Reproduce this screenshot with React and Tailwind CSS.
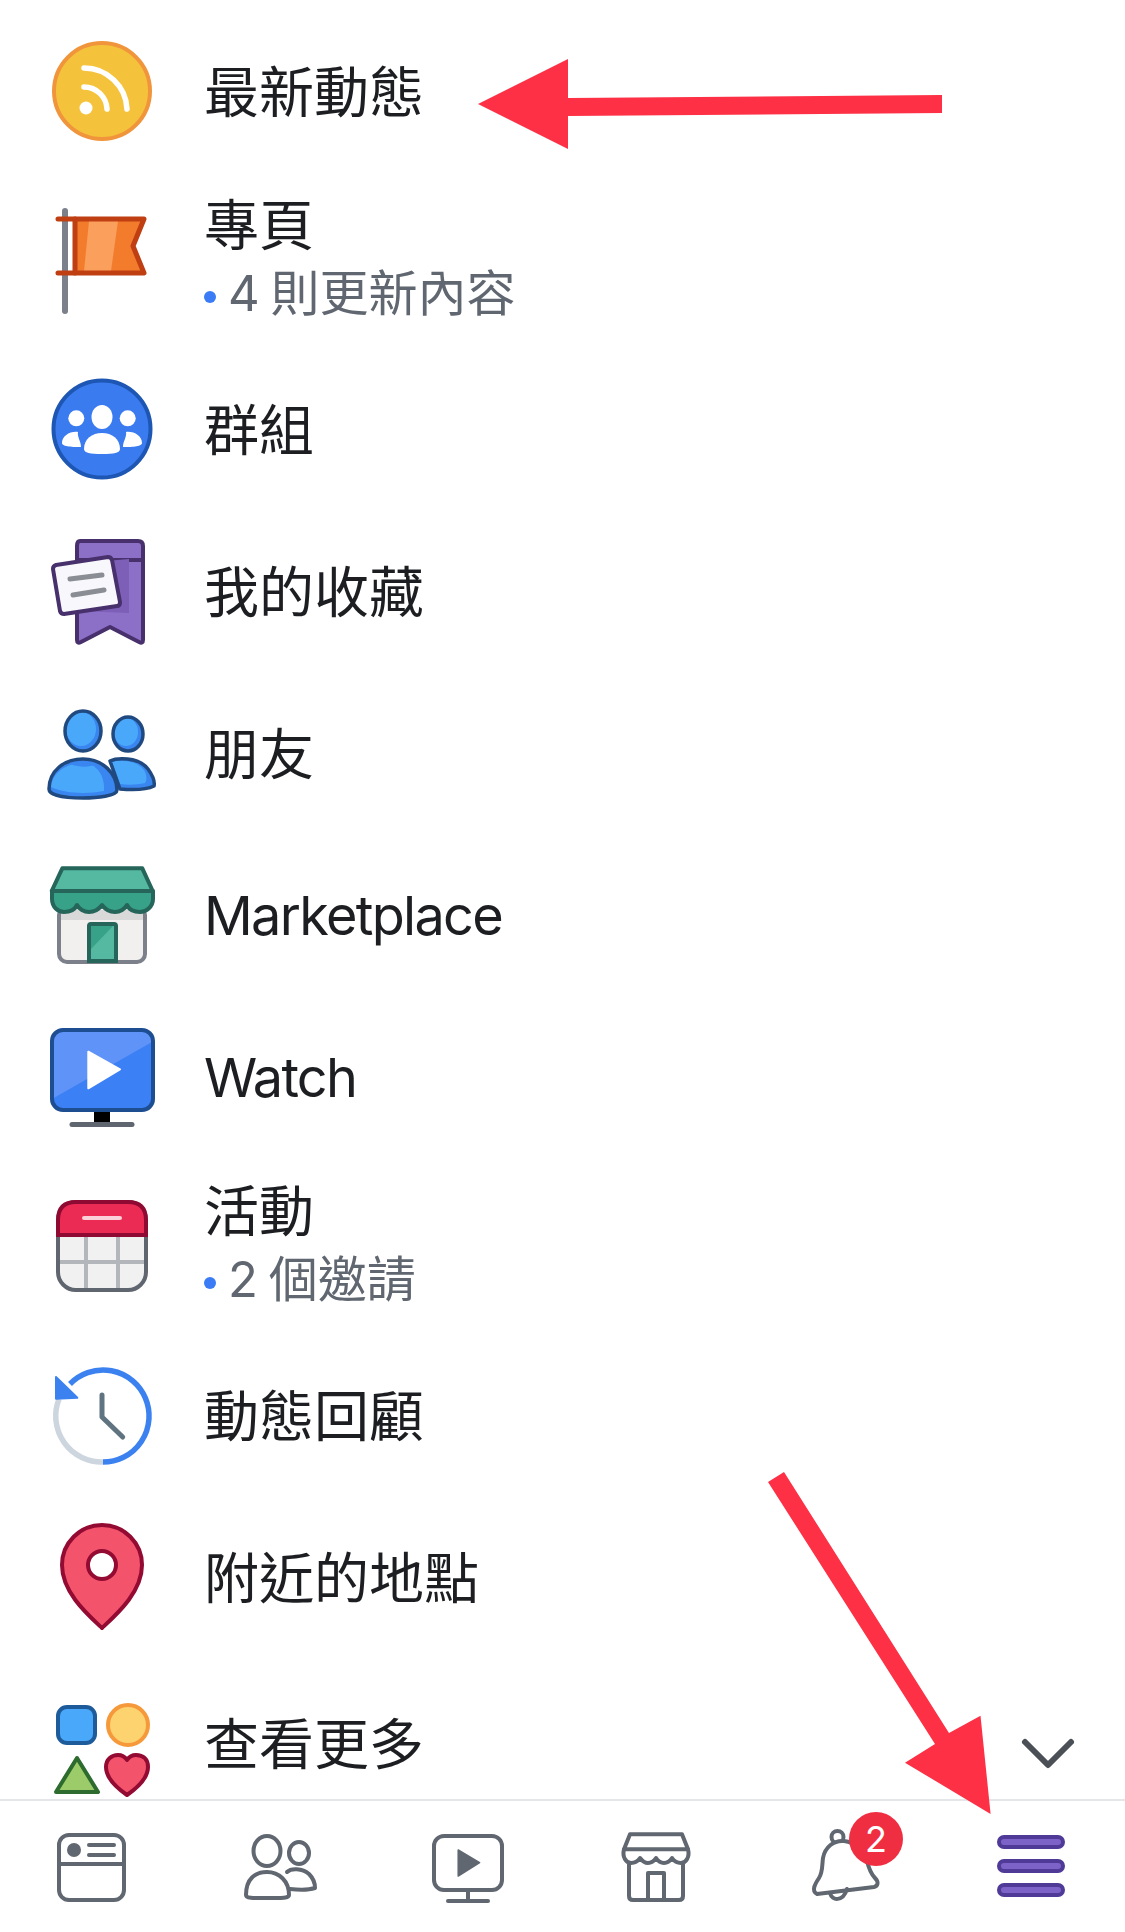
const FeedIcon = () => (
  <>
    <circle r="48" fill="#f5c33b" stroke="#f0953b" strokeWidth="4" />
    <circle cx="-16" cy="17" r="6.5" fill="#fff" />
    <g fill="none" stroke="#fff" strokeWidth="5.5" strokeLinecap="round">
      <path d="M-18 -23 A43 43 0 0 1 25 18" />
      <path d="M-18 -4 A23 23 0 0 1 5 18" />
    </g>
  </>
)

const FlagIcon = () => (
  <>
    <rect x="-40" y="-52" width="6" height="106" rx="3" fill="#7b808a" />
    <path d="M-27 -41H42L31 -14L42 13H-27Z" fill="#f27b2c" />
    <path d="M-13 -39H16L9 11H-18Z" fill="#fb9f5c" />
    <g fill="none" stroke="#bf3f12" strokeWidth="5" strokeLinecap="round" strokeLinejoin="round">
      <path d="M-44 -41H42L31 -14L42 13H-44" />
      <path d="M-27 -41V13" />
    </g>
  </>
)

const GroupsIcon = () => (
  <>
    <circle r="48.5" fill="#3b7bf0" stroke="#1d56b3" strokeWidth="4" />
    <g fill="#fff">
      <ellipse cy="-12" rx="10.5" ry="12" />
      <circle cx="-25.7" cy="-10.7" r="8" />
      <circle cx="25.7" cy="-10.7" r="8" />
      <path d="M-18 20C-18 10 -10 4 0 4C10 4 18 10 18 20C18 24 12 25 0 25C-12 25 -18 24 -18 20Z" />
      <path d="M-21 18C-28 18 -40 18 -40 14C-40 7 -32 2 -24 3C-25 8 -21 12 -21 18Z" />
      <path d="M21 18C28 18 40 18 40 14C40 7 32 2 24 3C25 8 21 12 21 18Z" />
    </g>
  </>
)

const BookmarkIcon = () => (
  <>
    <path d="M-22 -50H36Q41 -50 41 -45V49Q41 53 37 51L8 36L-21 51Q-25 53 -25 49V-45Q-25 -50 -22 -50Z" fill="#8c6fc6" stroke="#47306b" strokeWidth="4" strokeLinejoin="round" />
    <path d="M-25 -31H41" stroke="#47306b" strokeWidth="4" />
    <path d="M4 -30L27 -32V22L-22 20L-20 18Z" fill="#7d5fb8" />
    <path d="M-46 -26L6 -34Q9 -34 10 -31L18 11Q18 15 15 15L-38 23Q-41 23 -42 20L-49 -22Q-49 -25 -46 -26Z" fill="#f8f7fb" stroke="#47306b" strokeWidth="4" strokeLinejoin="round" />
    <g stroke="#8a8d94" strokeWidth="5" strokeLinecap="round">
      <path d="M-32 -12L0 -16" />
      <path d="M-29 4L2 -1" />
    </g>
  </>
)

const FriendsIcon = () => (
  <>
    {/* small person, behind */}
    <path d="M8 8C14 5 36 3 46 16C51 23 53 29 52 33C44 37 30 37 18 36Z" fill="#3a86f0" />
    <path d="M10 9C16 7 34 6 42 17C45 22 45 27 43 30C34 32 26 32 18 31Z" fill="#4aa8fb" />
    <path d="M8 8C14 5 36 3 46 16C51 23 53 29 52 33C44 37 30 37 18 36Z" fill="none" stroke="#20497f" strokeWidth="3.5" strokeLinejoin="round" />
    <ellipse cx="26" cy="-19" rx="15" ry="17" fill="#3a86f0" />
    <ellipse cx="24" cy="-21" rx="12" ry="14" fill="#4aa8fb" />
    <ellipse cx="26" cy="-19" rx="15" ry="17" fill="none" stroke="#20497f" strokeWidth="3.5" />
    {/* big person */}
    <ellipse cx="-19" cy="-22" rx="18" ry="20" fill="#3a86f0" />
    <ellipse cx="-21" cy="-24" rx="15" ry="17" fill="#4aa8fb" />
    <ellipse cx="-19" cy="-22" rx="18" ry="20" fill="none" stroke="#20497f" strokeWidth="3.5" />
    <path d="M-53 36C-53 18 -38 6 -19 6C0 6 15 20 15 37C15 43 -5 45 -19 45C-34 45 -53 43 -53 36Z" fill="#3a86f0" />
    <path d="M-51 34C-50 20 -36 10 -19 10C-6 10 3 22 2 38C-15 41 -36 41 -51 34Z" fill="#4aa8fb" />
    <path d="M-37 9C-25 15 -12 15 -4 10C-12 6 -28 5 -37 9Z" fill="#3a86f0" />
    <path d="M-53 36C-53 18 -38 6 -19 6C0 6 15 20 15 37C15 43 -5 45 -19 45C-34 45 -53 43 -53 36Z" fill="none" stroke="#20497f" strokeWidth="3.5" />
  </>
)

const MarketIcon = () => (
  <>
    <rect x="-43" y="-8" width="86" height="55" rx="8" fill="#f2f0ee" stroke="#7b808a" strokeWidth="4" />
    <path d="M-41 -5H41V5H-41Z" fill="#d9d9d9" />
    <path d="M-13 46V11Q-13 9 -11 9H12Q14 9 14 11V46Z" fill="#55b9a2" stroke="#25655a" strokeWidth="4" />
    <path d="M-11 11H11L-11 34Z" fill="#37a287" />
    <path d="M-50 -24H51V-16C51 -8 44 -3 38 -3C32 -3 27 -6 25 -10C23 -6 18 -3 13 -3C7 -3 3 -6 0 -10C-3 -6 -7 -3 -13 -3C-18 -3 -23 -6 -25 -10C-27 -6 -32 -3 -38 -3C-44 -3 -50 -8 -50 -16Z" fill="#37a287" stroke="#25655a" strokeWidth="4" strokeLinejoin="round" />
    <path d="M-39.7 -46.7H40.3L50.7 -24H-50.3Z" fill="#55b9a2" stroke="#25655a" strokeWidth="4" strokeLinejoin="round" />
  </>
)

const WatchIcon = () => (
  <>
    <rect x="-8" y="33" width="16" height="13" fill="#000" />
    <path d="M-30 47.5H30" stroke="#5f6670" strokeWidth="5" strokeLinecap="round" />
    <rect x="-50" y="-47" width="101" height="80" rx="11" fill="#3b80f5" />
    <path d="M-39 -47H40Q50 -47 50 -37V-35L-50 22V-37Q-50 -47 -39 -47Z" fill="#5f93f7" />
    <rect x="-50" y="-47" width="101" height="80" rx="11" fill="none" stroke="#1d4e92" strokeWidth="4" />
    <path d="M-13.7 -25.3L18 -7.7L-13.7 11.3Z" fill="#fff" stroke="#fff" strokeWidth="2" strokeLinejoin="round" />
  </>
)

const EventIcon = () => (
  <>
    <rect x="-44" y="-44" width="88" height="88" rx="18" fill="#f1f1f2" />
    <g stroke="#b3b6bb" strokeWidth="4">
      <path d="M-16 -10V44" />
      <path d="M16 -10V44" />
      <path d="M-44 16H44" />
    </g>
    <rect x="-44" y="-44" width="88" height="88" rx="18" fill="none" stroke="#5f6670" strokeWidth="4" />
    <path d="M-44 -11V-26Q-44 -44 -26 -44H26Q44 -44 44 -26V-11Z" fill="#ec2b55" stroke="#8f0a33" strokeWidth="4" />
    <path d="M-18 -28H18" stroke="#fbd0d8" strokeWidth="4" strokeLinecap="round" />
  </>
)

const MemoriesIcon = () => (
  <>
    <g fill="none" strokeWidth="5.5">
      <path d="M-43 -16A46 46 0 0 0 1 47" stroke="#cdd5de" />
      <path d="M1 47A46 46 0 1 0 -32 -31" stroke="#3b82f0" />
    </g>
    <path d="M-46 -38L-24.7 -17.3L-46 -16.3Z" fill="#3b82f0" stroke="#3b82f0" strokeWidth="2" strokeLinejoin="round" />
    <path d="M0 -20V2L20.7 22" fill="none" stroke="#5f7380" strokeWidth="5" strokeLinecap="round" strokeLinejoin="round" />
  </>
)

const PinIcon = () => (
  <>
    <path d="M0 51C-15 37 -40 15 -40 -12A40 40 0 0 1 40 -12C40 15 15 37 0 51Z" fill="#f4536c" stroke="#930a32" strokeWidth="4" strokeLinejoin="round" />
    <circle cy="-12" r="14" fill="#fff" stroke="#930a32" strokeWidth="4" />
  </>
)

const MoreIcon = () => (
  <>
    <rect x="-44" y="-36" width="37" height="36" rx="9" fill="#4aa8fb" stroke="#1d5b9b" strokeWidth="4" />
    <circle cx="26" cy="-18" r="20" fill="#fdd36f" stroke="#f6993b" strokeWidth="4" />
    <path d="M-25 15L-4 49H-46Z" fill="#9ccb69" stroke="#2e6b2e" strokeWidth="4" strokeLinejoin="round" />
    <path d="M25 52C12 43 4 34 4 24C4 16 10 12 16 12C20 12 23 14 25 17C27 14 30 12 34 12C41 12 46 16 46 24C46 34 38 43 25 52Z" fill="#f4536c" stroke="#930a32" strokeWidth="4" strokeLinejoin="round" />
  </>
)

const menuItems = [
  { label: '最新動態', Icon: FeedIcon },
  { label: '專頁', sub: '4 則更新內容', Icon: FlagIcon },
  { label: '群組', Icon: GroupsIcon },
  { label: '我的收藏', Icon: BookmarkIcon },
  { label: '朋友', Icon: FriendsIcon },
  { label: 'Marketplace', latin: true, Icon: MarketIcon },
  { label: 'Watch', latin: true, Icon: WatchIcon },
  { label: '活動', sub: '2 個邀請', Icon: EventIcon },
  { label: '動態回顧', Icon: MemoriesIcon },
  { label: '附近的地點', Icon: PinIcon },
]

function MenuRow({ label, sub, latin, Icon, height, children }) {
  return (
    <div className={`flex items-center pl-[37px] ${height || (sub ? 'h-[176px]' : 'h-[162px]')}`}>
      <svg className="w-[130px] h-[130px] shrink-0" viewBox="-65 -65 130 130">
        <Icon />
      </svg>
      <div className={`ml-[37px] ${sub ? 'pb-[3px]' : 'pt-[1px]'}`}>
        <div className={`leading-[66px] text-[#1c1e21] ${latin ? 'text-[54px] tracking-[-1.7px]' : 'text-[55px]'} ${sub ? 'mb-[3px]' : ''}`}>{label}</div>
        {sub && (
          <div className="flex items-center text-[49px] leading-[65px] text-[#606770] [word-spacing:-3px]">
            <span className="w-3 h-3 mt-2 mr-3 rounded-full bg-[#3b7cf6]" />
            {sub}
          </div>
        )}
      </div>
      {children}
    </div>
  )
}

const tabStroke = { fill: 'none', stroke: '#606770', strokeWidth: 4, strokeLinecap: 'round', strokeLinejoin: 'round' }

function Tab({ children }) {
  return (
    <div className="relative flex items-center justify-center">
      <svg className="w-[100px] h-[100px]" viewBox="-50 -50 100 100">
        {children}
      </svg>
    </div>
  )
}

export default function App() {
  return (
    <div className="relative flex flex-col w-[1125px] h-[1932px] overflow-hidden bg-white font-['Inter','Noto_Sans_CJK_TC',sans-serif]">
      <div className="flex-1 min-h-0 overflow-hidden pt-[10px]">
        {menuItems.map((item) => (
          <MenuRow key={item.label} {...item} />
        ))}
        <MenuRow label="查看更多" Icon={MoreIcon} height="h-[170px]">
          <svg className="w-[56px] h-[34px] ml-auto mr-[49px] mt-[21px]" viewBox="0 0 56 34" fill="none">
            <path d="M5 5L28 28L51 5" stroke="#4b4f56" strokeWidth="6" strokeLinecap="round" strokeLinejoin="round" />
          </svg>
        </MenuRow>
      </div>

      {/* Tab bar */}
      <div className="grid grid-cols-6 h-[133px] shrink-0 border-t-2 border-[#e4e6e9] bg-white">
        <Tab>
          <g {...tabStroke}>
            <rect x="-35" y="-32" width="65" height="65" rx="10" />
            <path d="M-35 -3H30" />
            <path d="M-5 -22H20" />
            <path d="M-5 -12H20" />
          </g>
          <circle cx="-20" cy="-17" r="7" fill="#606770" />
        </Tab>
        <Tab>
          <g {...tabStroke}>
            <ellipse cx="-14" cy="-16" rx="13.5" ry="15" />
            <ellipse cx="18" cy="-14" rx="10" ry="11" />
            <path d="M-35 28C-35 12 -26 5 -14 5C-2 5 8 14 8 28C8 32 -4 31 -14 31C-24 31 -35 32 -35 28Z" />
            <path d="M6 5C10 1 21 1 28 7C32 11 34 17 34 21C28 23 18 23 9 22" />
          </g>
        </Tab>
        <Tab>
          <g {...tabStroke}>
            <rect x="-35" y="-31" width="68" height="54" rx="10" />
            <path d="M-1 23V33" />
            <path d="M-21 34H19" />
          </g>
          <path d="M-10.8 -17L10.6 -4.3L-10.8 9Z" fill="#606770" stroke="#606770" strokeWidth="1.5" strokeLinejoin="round" />
        </Tab>
        <Tab>
          <g {...tabStroke}>
            <path d="M-27 -4V29Q-27 33 -23 33H23Q27 33 27 29V-4" />
            <path d="M-8 33V6H8V33" />
            <path d="M-26 -32.7H26L32 -17.7H-32Z" />
            <path d="M-32 -17.7C-34 -10 -30 -4 -25 -4C-20 -4 -18 -6 -16 -9C-13 -5 -10 -4 -8 -4C-4 -4 -2 -6 0 -9C2 -6 4 -4 8 -4C11 -4 14 -6 16 -9C18 -6 21 -4 25 -4C30 -4 34 -10 32 -17.7" />
          </g>
        </Tab>
        <Tab>
          <g {...tabStroke}>
            <circle cx="-6.5" cy="-30" r="6" />
            <path d="M-27 27C-33 24 -29 17 -25 11C-21 5 -22 -3 -21 -9C-19 -20 -10 -27 0 -26C12 -25 20 -15 23 -6C25 2 27 7 31 11C35 15 34 19 30 20Z" fill="#fff" />
            <path d="M-14 26C-12 34 -1 35 3 22" />
          </g>
        </Tab>
        <Tab>
          <g fill="#7d63c7" stroke="#4f3a98" strokeWidth="4">
            <rect x="-32" y="-30" width="64" height="10" rx="5" />
            <rect x="-32" y="-6" width="64" height="10" rx="5" />
            <rect x="-32" y="18" width="64" height="10" rx="5" />
          </g>
        </Tab>
      </div>

      {/* Notification badge */}
      <div className="absolute left-[849px] top-[1812px] flex items-center justify-center w-[54px] h-[54px] rounded-full bg-[#f02e42] text-white text-[36px] leading-none">
        2
      </div>

      {/* Annotation arrows */}
      <svg className="absolute inset-0 w-[1125px] h-[1932px] pointer-events-none" viewBox="0 0 1125 1932">
        <path d="M478 104L568 59V98L942 95V113L568 116V149Z" fill="#fd3045" />
        <path d="M768 1482L784 1472L949 1733L980.5 1715.7L990.6 1814L905 1762.7L935 1744Z" fill="#fd3045" />
      </svg>
    </div>
  )
}
